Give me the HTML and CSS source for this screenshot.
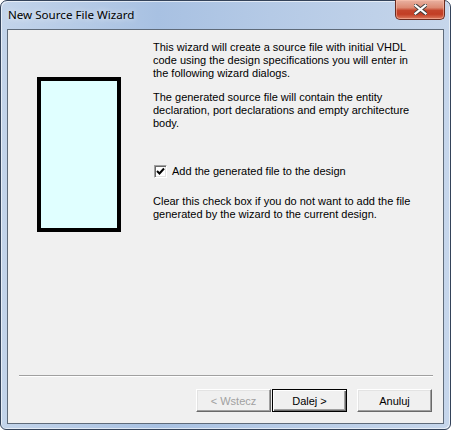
FILE: index.html
```html
<!DOCTYPE html>
<html lang="en">
<head>
    <meta charset="UTF-8">
    <meta name="viewport" content="width=device-width, initial-scale=1.0">
    <title>New Source File Wizard</title>
    <link rel="stylesheet" href="styles.css">
</head>
<body>
    <div class="window">
        <div class="titlebar">
            <span class="title">New Source File Wizard</span>
            <button class="close-button" aria-label="Close">
                <svg width="13" height="11" viewBox="0 0 13 11">
                    <path d="M1.5 1.5 L11.5 9.5 M11.5 1.5 L1.5 9.5" stroke="#3b3b3b" stroke-width="4" stroke-linecap="square"/>
                    <path d="M1.5 1.5 L11.5 9.5 M11.5 1.5 L1.5 9.5" stroke="#fff" stroke-width="2.2" stroke-linecap="square"/>
                </svg>
            </button>
        </div>

        <div class="client">
            <div class="content">
                <div class="preview"></div>
                <div class="info">
                    <p>This wizard will create a source file with initial VHDL<br>code using the design specifications you will enter in<br>the following wizard dialogs.</p>
                    <p>The generated source file will contain the entity<br>declaration, port declarations and empty architecture<br>body.</p>
                    <label class="check">
                        <span class="check-box">
                            <svg width="9" height="9" viewBox="0 0 9 9">
                                <polyline points="1,4 3.5,6.5 8,1.5" fill="none" stroke="#000" stroke-width="2"/>
                            </svg>
                        </span>
                        Add the generated file to the design
                    </label>
                    <p class="hint">Clear this check box if you do not want to add the file<br>generated by the wizard to the current design.</p>
                </div>
            </div>

            <!-- Wizard navigation -->
            <div class="footer">
                <div class="separator"></div>
                <div class="buttons">
                    <button class="btn" disabled>&lt; Wstecz</button>
                    <button class="btn default">Dalej &gt;</button>
                    <button class="btn cancel">Anuluj</button>
                </div>
            </div>
        </div>
    </div>
</body>
</html>
```

FILE: styles.css
```css
body {
    margin: 0;
    padding: 0;
    background-color: #fff;
}
.window {
    width: 451px;
    height: 430px;
    box-sizing: border-box;
    border: 1px solid #34435a;
    border-radius: 7px 7px 6px 6px;
    background: linear-gradient(90deg, #c3d4ea 0%, #a8c1e2 35%, #b5cae6 60%, #c6d6eb 100%);
    box-shadow: inset 1px 1px 0 rgba(255, 255, 255, 0.6), inset -1px -1px 0 rgba(255, 255, 255, 0.6);
    display: flex;
    flex-direction: column;
    padding: 0 6px 5px 6px;
}
.titlebar {
    height: 28px;
    display: flex;
    align-items: center;
    padding-left: 1px;
}
.title {
    font-family: 'Noto Sans', 'Open Sans', sans-serif;
    font-size: 11.6px;
    color: #000;
    text-shadow: 0 0 6px rgba(255, 255, 255, 0.9);
    padding-bottom: 1px;
}
.close-button {
    margin-left: auto;
    margin-right: -1px;
    align-self: flex-start;
    margin-top: -1px;
    width: 50px;
    height: 20px;
    padding: 0;
    border: 1px solid #6b2b1f;
    border-top: none;
    border-radius: 0 0 5px 5px;
    background: linear-gradient(180deg, #e9b2a2 0%, #dc8a73 40%, #c4452c 55%, #c23e25 75%, #dc7a5e 100%);
    box-shadow: inset 0 0 0 1px rgba(255, 200, 180, 0.5);
    display: flex;
    align-items: center;
    justify-content: center;
}
.client {
    flex: 1;
    border: 1px solid #5f6b7a;
    background-color: #f0f0f0;
    display: flex;
    flex-direction: column;
    font-family: 'Liberation Sans', Arial, sans-serif;
    font-size: 11px;
    line-height: 13px;
    color: #000;
}
.content {
    flex: 1;
    display: flex;
}
.preview {
    margin-left: 29px;
    margin-top: 47px;
    width: 84px;
    height: 155px;
    box-sizing: border-box;
    border: 4px solid #000;
    background-color: #e0ffff;
}
.info {
    margin-left: 32px;
    padding-top: 11px;
}
.info p {
    margin: 0 0 11px 0;
    white-space: nowrap;
}
.check {
    display: flex;
    align-items: center;
    gap: 5px;
    margin-top: 35px;
    margin-left: 1px;
    height: 13px;
}
.check-box {
    width: 13px;
    height: 13px;
    box-sizing: border-box;
    background-color: #fff;
    border: 1px solid;
    border-color: #a0a0a0 #fff #fff #a0a0a0;
    box-shadow: inset 1px 1px 0 #696969, inset -1px -1px 0 #e3e3e3;
    display: flex;
    align-items: center;
    justify-content: center;
}
.info p.hint {
    margin-top: 17px;
}
.separator {
    margin: 0 10px 0 11px;
    border-top: 1px solid #a0a0a0;
    border-bottom: 1px solid #fff;
}
.buttons {
    display: flex;
    justify-content: flex-end;
    padding: 12px 11px 11px 0;
}
.btn {
    width: 75px;
    height: 23px;
    padding: 0;
    font-family: 'Liberation Sans', Arial, sans-serif;
    font-size: 11px;
    color: #000;
    background-color: #f0f0f0;
    border: 1px solid;
    border-color: #fff #696969 #696969 #fff;
    box-shadow: inset -1px -1px 0 #a0a0a0, inset 1px 1px 0 #e3e3e3;
}
.btn:disabled {
    color: #a0a0a0;
}
.btn.default {
    margin-left: 1px;
    border: 1px solid #000;
    box-shadow: inset 1px 1px 0 #fff, inset -1px -1px 0 #696969, inset -2px -2px 0 #a0a0a0;
}
.btn.cancel {
    margin-left: 10px;
}
```
